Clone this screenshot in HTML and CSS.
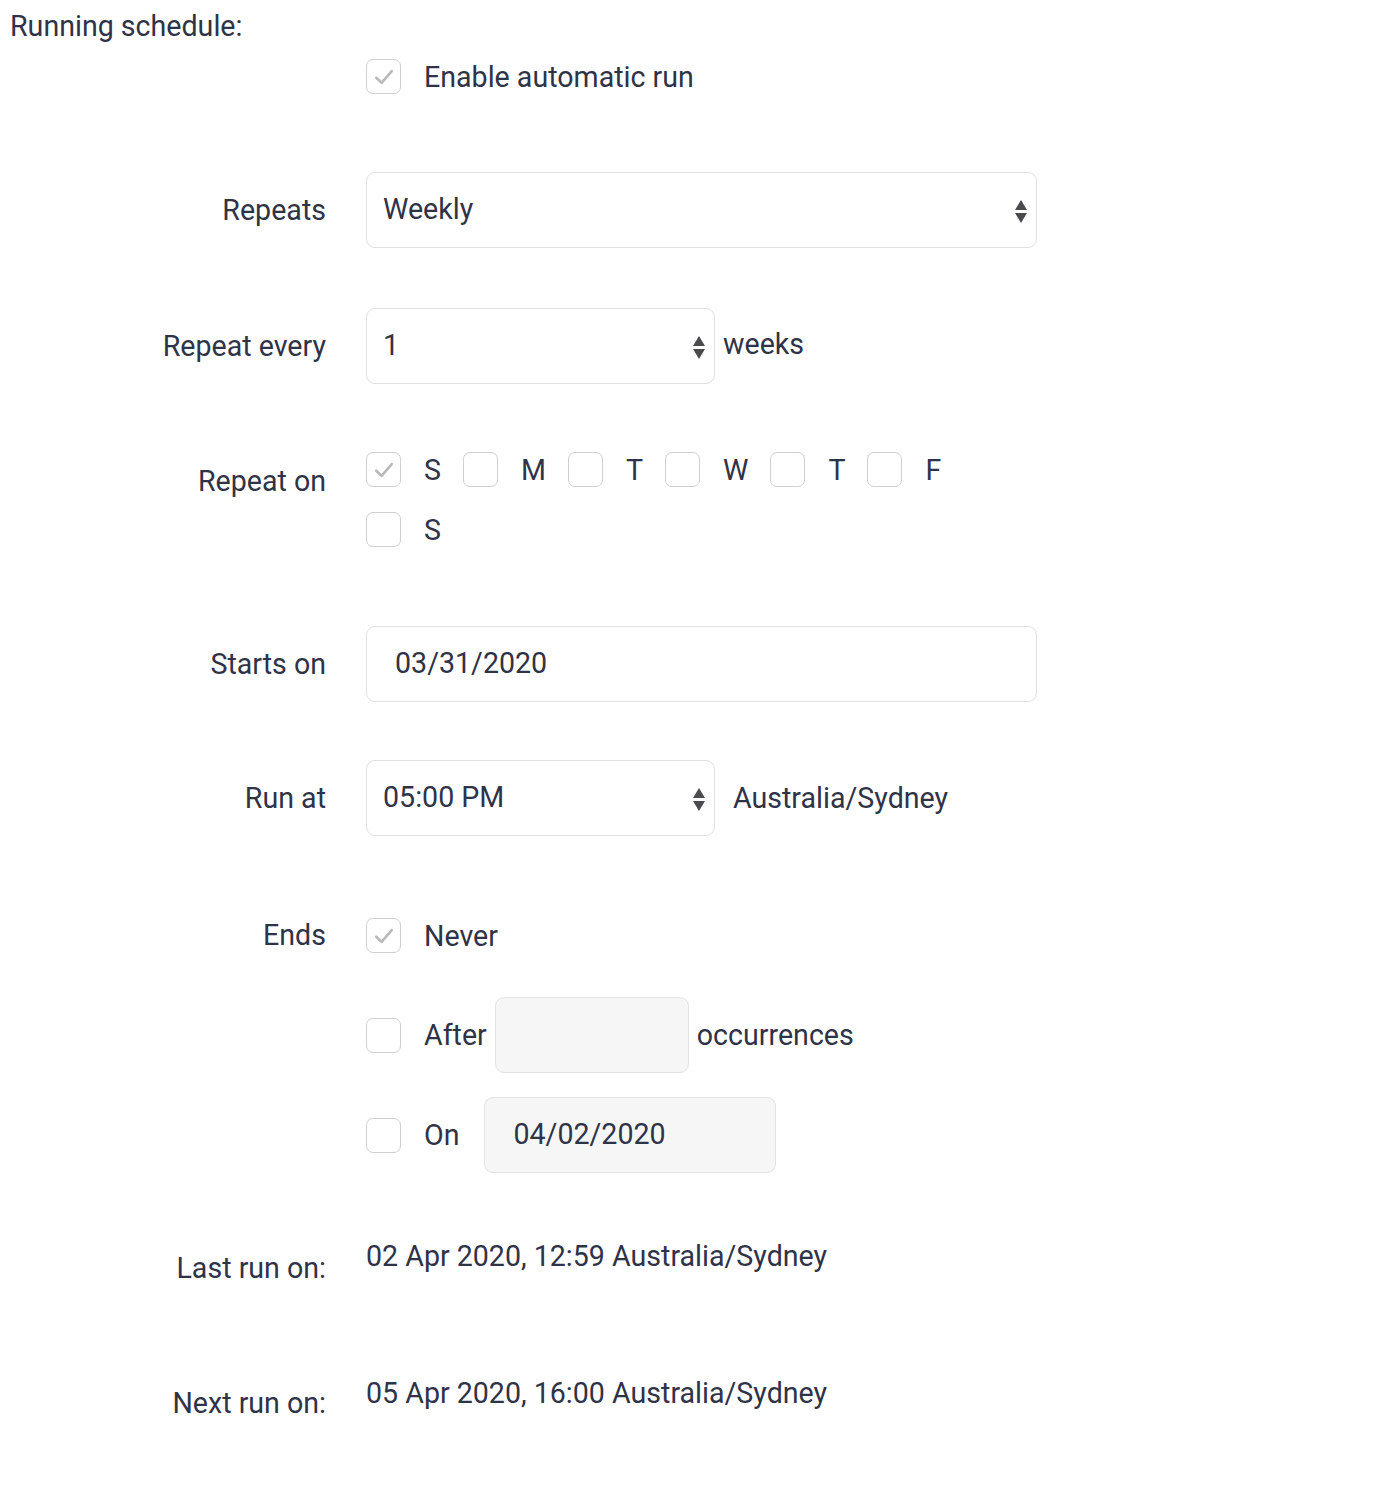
FILE: index.html
```html
<!DOCTYPE html>
<html>
<head>
<meta charset="utf-8">
<title>Running schedule</title>
<link rel="stylesheet" href="styles.css">
</head>
<body>
<div class="page">
  <div class="heading">Running schedule:</div>

  <div class="row row-enable">
    <div class="label"></div>
    <div class="field">
      <label class="check"><span class="box checked"><svg viewBox="0 0 20 20" class="tick"><path d="M4.5 10.5 L8.3 14.2 L15.5 5.8"/></svg></span><span class="ctext">Enable automatic run</span></label>
    </div>
  </div>

  <div class="row row-repeats">
    <div class="label">Repeats</div>
    <div class="field">
      <div class="input select wide"><span>Weekly</span><span class="arrows"><i class="up"></i><i class="down"></i></span></div>
    </div>
  </div>

  <div class="row row-every">
    <div class="label">Repeat every</div>
    <div class="field">
      <div class="input select half"><span>1</span><span class="arrows"><i class="up"></i><i class="down"></i></span></div>
      <span class="after-select">weeks</span>
    </div>
  </div>

  <div class="row row-on top">
    <div class="label label-top">Repeat on</div>
    <div class="field days">
      <label class="check day"><span class="box checked"><svg viewBox="0 0 20 20" class="tick"><path d="M4.5 10.5 L8.3 14.2 L15.5 5.8"/></svg></span><span class="ctext">S</span></label>
      <label class="check day"><span class="box"></span><span class="ctext">M</span></label>
      <label class="check day"><span class="box"></span><span class="ctext">T</span></label>
      <label class="check day"><span class="box"></span><span class="ctext">W</span></label>
      <label class="check day"><span class="box"></span><span class="ctext">T</span></label>
      <label class="check day"><span class="box"></span><span class="ctext">F</span></label>
      <label class="check day"><span class="box"></span><span class="ctext">S</span></label>
    </div>
  </div>

  <div class="row row-starts">
    <div class="label">Starts on</div>
    <div class="field">
      <div class="input wide date"><span>03/31/2020</span></div>
    </div>
  </div>

  <div class="row row-runat">
    <div class="label">Run at</div>
    <div class="field">
      <div class="input select half"><span>05:00 PM</span><span class="arrows"><i class="up"></i><i class="down"></i></span></div>
      <span class="tz">Australia/Sydney</span>
    </div>
  </div>

  <div class="row row-ends top">
    <div class="label label-ends">Ends</div>
    <div class="field ends">
      <div class="end-line never">
        <label class="check"><span class="box checked"><svg viewBox="0 0 20 20" class="tick"><path d="M4.5 10.5 L8.3 14.2 L15.5 5.8"/></svg></span><span class="ctext">Never</span></label>
      </div>
      <div class="end-line after">
        <label class="check"><span class="box"></span><span class="ctext">After</span></label>
        <div class="input disabled occ"></div>
        <span class="occ-text">occurrences</span>
      </div>
      <div class="end-line on">
        <label class="check"><span class="box"></span><span class="ctext">On</span></label>
        <div class="input disabled ondate"><span>04/02/2020</span></div>
      </div>
    </div>
  </div>

  <div class="row row-last top">
    <div class="label label-info">Last run on:</div>
    <div class="field info">02 Apr 2020, 12:59 Australia/Sydney</div>
  </div>

  <div class="row row-next top">
    <div class="label label-info2">Next run on:</div>
    <div class="field info">05 Apr 2020, 16:00 Australia/Sydney</div>
  </div>
</div>
</body>
</html>
```

FILE: styles.css
```css
* { box-sizing: border-box; }

html, body {
  margin: 0;
  padding: 0;
  background: #ffffff;
}

body {
  font-family: Roboto, "Liberation Sans", sans-serif;
  font-size: 28.6px;
  color: #2f3347;
  line-height: 34px;
}

.page {
  width: 1400px;
  padding-bottom: 60px;
}

.heading {
  padding: 9px 0 0 10px;
  height: 42px;
}

.row {
  display: flex;
  align-items: center;
}

.row.top { align-items: flex-start; }

.label {
  width: 326px;
  flex: 0 0 326px;
  text-align: right;
  margin-right: 40px;
}

.field {
  display: flex;
  align-items: center;
}

/* checkbox */
.check {
  display: flex;
  align-items: center;
}

.box {
  width: 35px;
  height: 35px;
  flex: 0 0 35px;
  border: 1.5px solid #cfcfd4;
  border-radius: 7px;
  background: #ffffff;
  display: flex;
  align-items: center;
  justify-content: center;
}

.tick {
  width: 28px;
  height: 28px;
}

.tick path {
  fill: none;
  stroke: #b9b9be;
  stroke-width: 1.9;
  stroke-linecap: round;
  stroke-linejoin: round;
}

.ctext {
  margin-left: 23px;
}

/* inputs */
.input {
  height: 76px;
  border: 1.5px solid #e1e1e4;
  border-radius: 9px;
  background: #ffffff;
  display: flex;
  align-items: center;
  padding-left: 16px;
  padding-bottom: 2px;
}

.input.wide { width: 671px; }
.input.half { width: 349px; }

.input.select {
  justify-content: space-between;
  padding-right: 9px;
}

.input.date { padding-left: 28px; }

.arrows {
  display: flex;
  flex-direction: column;
  align-items: center;
  gap: 3px;
  margin-top: 4px;
}

.arrows i {
  display: block;
  width: 0;
  height: 0;
  border-left: 6px solid transparent;
  border-right: 6px solid transparent;
}

.arrows .up { border-bottom: 10px solid #4a4a4f; }
.arrows .down { border-top: 10px solid #4a4a4f; }

.after-select {
  margin-left: 8px;
  padding-bottom: 4px;
}

.tz {
  margin-left: 18px;
}

.input.disabled {
  background: #f6f6f7;
  border-color: #e3e3e6;
}

/* row positions */
.row-enable { margin-top: 17px; height: 35px; }
.row-repeats { margin-top: 78px; }
.row-every { margin-top: 60px; }
.row-on { margin-top: 68px; }
.row-starts { margin-top: 79px; }
.row-runat { margin-top: 58px; }
.row-ends { margin-top: 82px; }
.row-last { margin-top: 66px; }
.row-next { margin-top: 91px; }

.label-top { padding-top: 12px; }

.days {
  flex-wrap: wrap;
  width: 610px;
  row-gap: 25px;
}

.day { margin-right: 22px; }

.ends {
  flex-direction: column;
  align-items: flex-start;
}

.label-ends { line-height: 35px; }

.end-line {
  display: flex;
  align-items: center;
}

.end-line.never { height: 35px; }
.end-line.after { margin-top: 44px; }
.end-line.on { margin-top: 24px; }

.input.occ {
  width: 194px;
  margin-left: 8px;
}

.occ-text { margin-left: 8px; }

.input.ondate {
  width: 292px;
  margin-left: 25px;
  padding-left: 28px;
  height: 76px;
}

.label-info { padding-top: 12px; }
.label-info2 { padding-top: 10px; }

.info { display: block; }
```
